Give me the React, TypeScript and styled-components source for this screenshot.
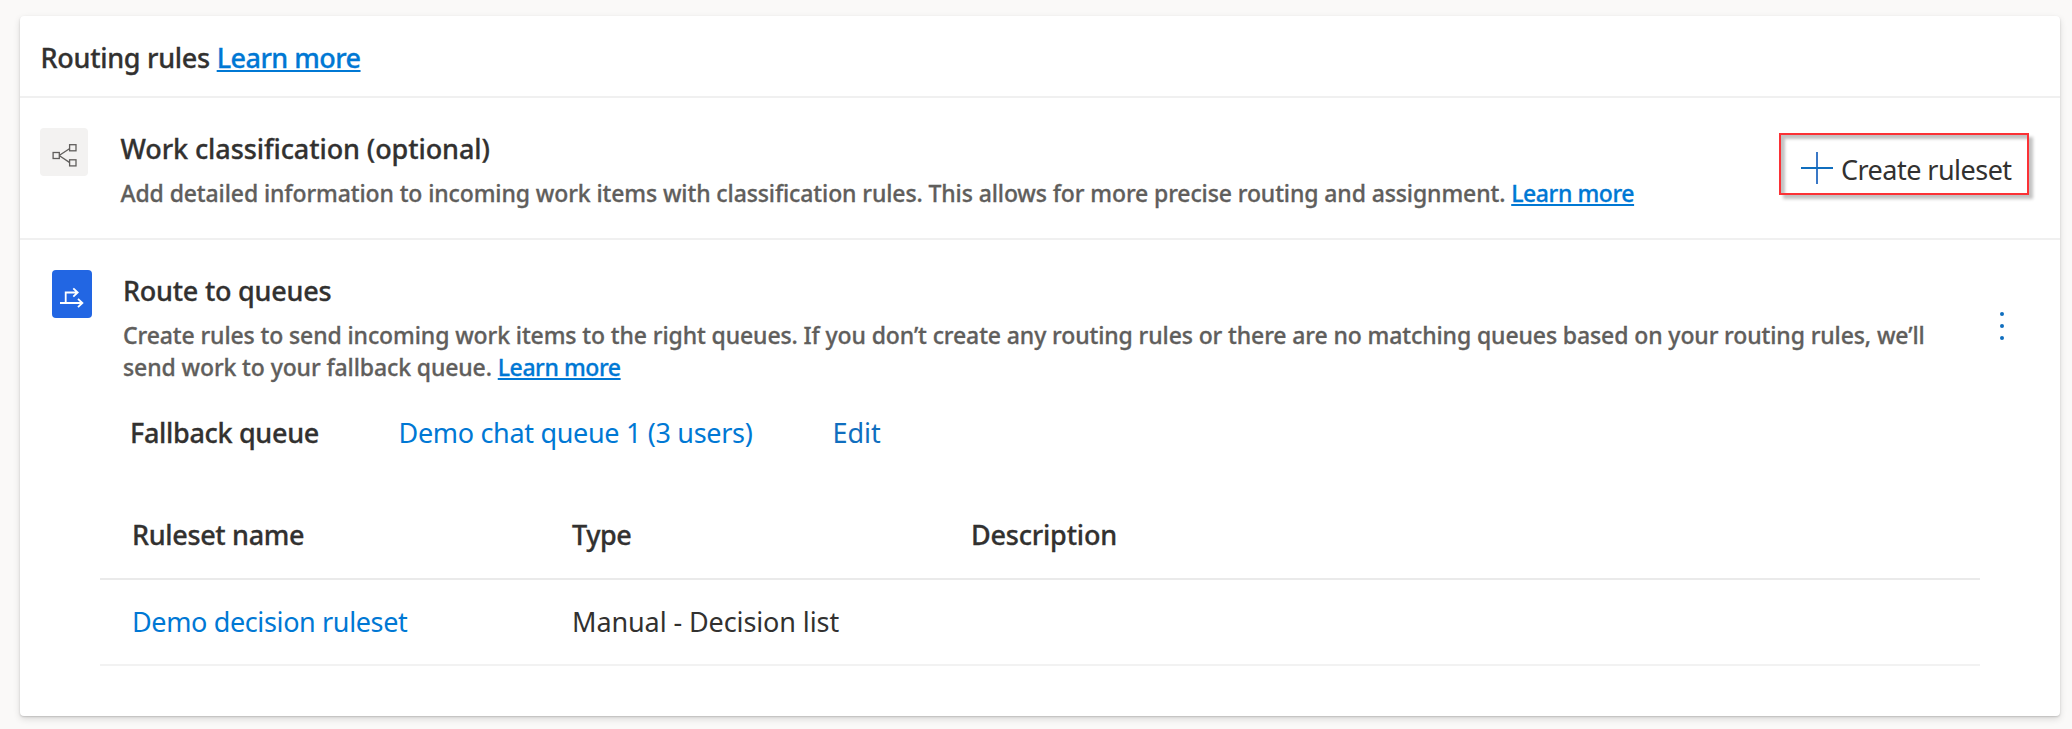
import React from "react";
import styled, { createGlobalStyle } from "styled-components";

const GlobalStyle = createGlobalStyle`
  * { box-sizing: border-box; }
  body {
    margin: 0;
    background: #faf9f8;
    font-family: "Noto Sans", "Open Sans", sans-serif;
    color: #323130;
  }
`;

const Page = styled.main`
  height: 729px;
  padding: 16px 12px 13px 20px;
  overflow: hidden;
`;

const Card = styled.section`
  height: 700px;
  background: #fff;
  border-radius: 4px;
  box-shadow: 0 3px 7px rgba(0, 0, 0, 0.13), 0 1px 2px rgba(0, 0, 0, 0.16);
`;

const CardHeader = styled.header`
  display: flex;
  align-items: baseline;
  height: 82px;
  padding: 23px 0 0 20.5px;
  border-bottom: 2px solid #f0f0f0;
`;

const Label = styled.span<{ $track?: number; $strong?: boolean }>`
  font-size: 27px;
  line-height: 36px;
  font-weight: ${(p) => (p.$strong ? 500 : 400)};
  -webkit-text-stroke: ${(p) => (p.$strong ? "0.3px" : "0")};
  letter-spacing: ${(p) => p.$track ?? 0}px;
  white-space: pre;
`;

const Heading = styled.h2<{ $track: number }>`
  margin: 0;
  font-size: 27px;
  line-height: 36px;
  font-weight: 500;
  -webkit-text-stroke: 0.3px;
  letter-spacing: ${(p) => p.$track}px;
`;

const LearnMore = styled.a<{ $large?: boolean }>`
  color: #0078d4;
  font-weight: 500;
  -webkit-text-stroke: 0.3px;
  font-size: ${(p) => (p.$large ? 27 : 23)}px;
  letter-spacing: ${(p) => (p.$large ? -0.53 : -0.42)}px;
  text-decoration: underline;
  text-decoration-thickness: 2px;
  text-underline-offset: 2px;
  text-decoration-skip-ink: none;
`;

const Text = styled.p<{ $track: number }>`
  margin: 10px 0 0;
  color: #605e5c;
  font-size: 23px;
  line-height: 32px;
  font-weight: 500;
  -webkit-text-stroke: 0.3px;
  letter-spacing: ${(p) => p.$track}px;
  white-space: nowrap;
`;

const ClassificationRow = styled.div`
  display: flex;
  align-items: flex-start;
  height: 142px;
  padding: 30px 31px 0 20px;
  border-bottom: 2px solid #f0f0f0;
`;

const IconTile = styled.div<{ $primary?: boolean }>`
  flex: none;
  width: ${(p) => (p.$primary ? 40 : 48)}px;
  height: 48px;
  border-radius: 4px;
  background: ${(p) => (p.$primary ? "#2266e3" : "#f3f2f1")};
  svg { display: block; }
`;

const Body = styled.div<{ $gap: number }>`
  flex: 1;
  min-width: 0;
  padding-top: 3px;
  margin-left: ${(p) => p.$gap}px;
`;

const CreateButton = styled.button`
  display: flex;
  align-items: flex-start;
  flex: none;
  width: 250px;
  height: 62px;
  margin: 5px 0 0;
  padding: 17px 0 0 20px;
  gap: 8px;
  border: 2px solid #fb3236;
  background: transparent;
  box-shadow: 4px 4px 3px rgba(0, 0, 0, 0.24), inset 4px 4px 3px rgba(0, 0, 0, 0.24);
  color: inherit;
  font-family: inherit;
`;

const RouteRow = styled.div`
  display: flex;
  align-items: flex-start;
  padding: 30px 51px 0 32px;
`;

const MoreButton = styled.button`
  display: flex;
  flex-direction: column;
  align-items: center;
  gap: 8px;
  margin: 42px 0 0;
  padding: 0;
  width: 15px;
  border: 0;
  background: none;
`;

const Dot = styled.i`
  width: 4px;
  height: 4px;
  border-radius: 50%;
  background: #106ebe;
`;

const FallbackRow = styled.div`
  display: grid;
  grid-template-columns: 268.5px 434px auto;
  height: 75px;
  margin-top: 32px;
  padding-left: 110px;
`;

const LinkLabel = styled(Label).attrs({ as: "a" })`
  color: #0078d4;
`;

const EditLink = styled(LinkLabel)`
  color: #106ebe;
`;

const Table = styled.div`
  margin: 0 80px;
`;

const TableRow = styled.div<{ $head?: boolean }>`
  display: grid;
  grid-template-columns: 440px 399px 1fr;
  align-items: center;
  height: ${(p) => (p.$head ? 90 : 86)}px;
  padding-left: 32px;
  padding-top: ${(p) => (p.$head ? 2 : 0)}px;
  border-bottom: 2px solid ${(p) => (p.$head ? "#eaeaea" : "#f2f2f2")};
`;

const ShareIcon = () => (
  <svg width="48" height="48" viewBox="0 0 48 48" fill="none" stroke="#605e5c" strokeWidth="1.3">
    <rect x="13.1" y="24.5" width="6.2" height="6" />
    <rect x="29.6" y="16.7" width="6.4" height="6.1" />
    <rect x="29.6" y="31.8" width="6.4" height="6.1" />
    <path d="M19.5 27.3 29.4 20.7M19.5 27.7 29.4 34.4" />
  </svg>
);

const RouteIcon = () => (
  <svg width="40" height="48" viewBox="0 0 40 48" fill="none" stroke="#fff" strokeWidth="1.8">
    <path d="M8 33H30.3M13.7 33V22.5H25.5M21.3 18.3 25.7 22.5 21.3 26.7M26 28.8 30.4 33 26 37.2" />
  </svg>
);

const PlusIcon = () => (
  <svg width="32" height="32" viewBox="0 0 32 32" stroke="#106ebe" strokeWidth="2">
    <path d="M16 0V32" stroke="#3a78c6" />
    <path d="M0 16H32" />
  </svg>
);

export default function App() {
  return (
    <>
      <GlobalStyle />
      <Page>
        <Card>
          <CardHeader>
            <Label $strong $track={-0.28}>Routing rules </Label>
            <LearnMore $large>Learn more</LearnMore>
          </CardHeader>
          <ClassificationRow>
            <IconTile><ShareIcon /></IconTile>
            <Body $gap={32.5}>
              <Heading $track={-0.09}>Work classification (optional)</Heading>
              <Text $track={-0.11}>
                Add detailed information to incoming work items with classification rules. This allows for more precise routing and assignment.{" "}
                <LearnMore>Learn more</LearnMore>
              </Text>
            </Body>
            <CreateButton>
              <PlusIcon />
              <Label $track={-0.53}>Create ruleset</Label>
            </CreateButton>
          </ClassificationRow>
          <RouteRow>
            <IconTile $primary><RouteIcon /></IconTile>
            <Body $gap={31}>
              <Heading $track={-0.24}>Route to queues</Heading>
              <Text $track={-0.11}>
                Create rules to send incoming work items to the right queues. If you don’t create any routing rules or there are no matching queues based on your routing rules, we’ll
                <br />
                send work to your fallback queue. <LearnMore>Learn more</LearnMore>
              </Text>
            </Body>
            <MoreButton aria-label="More actions"><Dot /><Dot /><Dot /></MoreButton>
          </RouteRow>
          <FallbackRow>
            <Label $strong $track={-0.32}>Fallback queue</Label>
            <LinkLabel $track={-0.32}>Demo chat queue 1 (3 users)</LinkLabel>
            <EditLink>Edit</EditLink>
          </FallbackRow>
          <Table>
            <TableRow $head>
              <Label $strong $track={-0.34}>Ruleset name</Label>
              <Label $strong $track={-0.5}>Type</Label>
              <Label $strong $track={-0.2}>Description</Label>
            </TableRow>
            <TableRow>
              <LinkLabel $track={-0.37}>Demo decision ruleset</LinkLabel>
              <Label $track={-0.1}>Manual - Decision list</Label>
            </TableRow>
          </Table>
        </Card>
      </Page>
    </>
  );
}
